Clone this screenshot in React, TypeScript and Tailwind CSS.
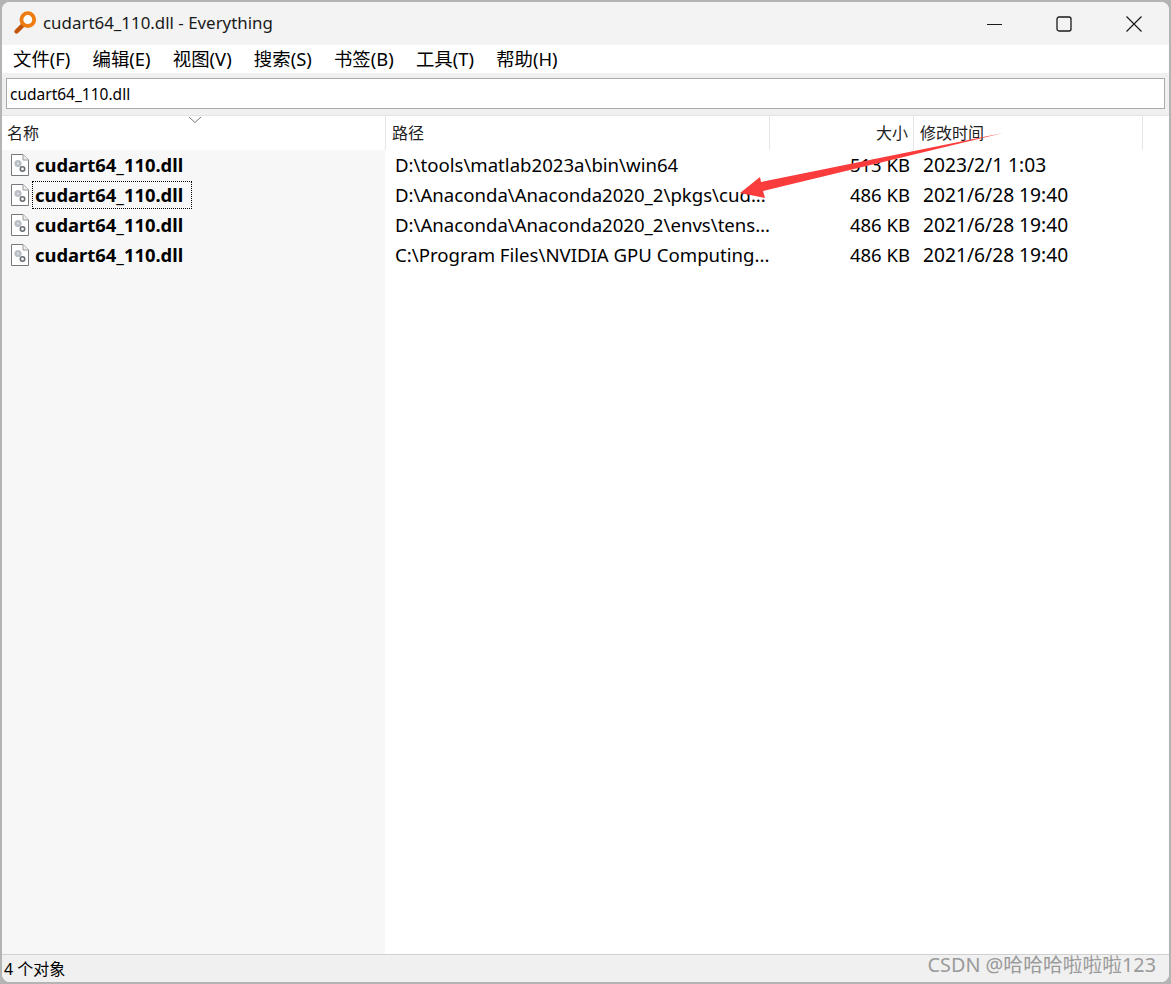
const FONT = 'font-["Noto_Sans","Noto_Sans_CJK_SC",sans-serif]'

const MENUS = ['文件(F)', '编辑(E)', '视图(V)', '搜索(S)', '书签(B)', '工具(T)', '帮助(H)']

const ROWS = [
  { path: 'D:\\tools\\matlab2023a\\bin\\win64', size: '513 KB', date: '2023/2/1 1:03' },
  { path: 'D:\\Anaconda\\Anaconda2020_2\\pkgs\\cud...', size: '486 KB', date: '2021/6/28 19:40', focused: true },
  { path: 'D:\\Anaconda\\Anaconda2020_2\\envs\\tens...', size: '486 KB', date: '2021/6/28 19:40' },
  { path: 'C:\\Program Files\\NVIDIA GPU Computing...', size: '486 KB', date: '2021/6/28 19:40' },
]

function AppIcon() {
  return (
    <svg width="24" height="24" viewBox="0 0 24 24" className="shrink-0">
      <path d="M10 14 L3.5 20.5" stroke="#c2540a" strokeWidth="4.4" strokeLinecap="round" />
      <circle cx="14.8" cy="8.6" r="6.4" fill="#fff" stroke="#ed7d12" strokeWidth="3.8" />
    </svg>
  )
}

function DllIcon() {
  return (
    <svg width="18" height="22" viewBox="0 0 18 22" className="shrink-0">
      <path d="M.5.5H12L17.5 6V21.5H.5Z" fill="#fff" stroke="#77797c" />
      <path d="M12 .5V6H17.5" fill="#eee" stroke="#9a9a9a" />
      <circle cx="7" cy="9.5" r="3.6" fill="#b9bfc5" />
      <circle cx="7" cy="9.5" r="1" fill="#e8eaec" />
      <circle cx="11.5" cy="15" r="2.2" fill="#fff" stroke="#666c72" strokeWidth="1.6" />
    </svg>
  )
}

function WindowButtons() {
  return (
    <div className="flex items-center text-[#1a1a1a]">
      <svg width="16" height="16" viewBox="0 0 16 16" className="mr-[53px]">
        <path d="M0 8.5H15" stroke="currentColor" strokeWidth="1" />
      </svg>
      <svg width="16" height="16" viewBox="0 0 16 16" className="mr-[54px]">
        <rect x="1" y="1" width="14" height="14" rx="2" fill="none" stroke="currentColor" strokeWidth="1.3" />
      </svg>
      <svg width="16" height="16" viewBox="0 0 16 16" className="mr-[27px]">
        <path d="M.5.5L15.5 15.5M15.5.5L.5 15.5" stroke="currentColor" strokeWidth="1.2" />
      </svg>
    </div>
  )
}

export default function App() {
  return (
    <div className={`${FONT} relative h-[984px] w-[1171px] overflow-hidden bg-[#b4b4b4] text-[18.6px] text-black`}>
      <div className="absolute inset-x-[2px] top-[2px] bottom-[2px] flex flex-col overflow-hidden rounded-[8px] bg-white">
        {/* Title bar */}
        <div className="flex h-[43px] shrink-0 items-center justify-between bg-[#f3f3f3]">
          <div className="flex items-center gap-[6px] pl-[11px]">
            <AppIcon />
            <span className="pb-[2px] text-[16.9px] text-[#1a1a1a]">cudart64_110.dll - Everything</span>
          </div>
          <WindowButtons />
        </div>

        {/* Menu */}
        <div className="flex h-[28px] shrink-0 items-center gap-[22.2px] pl-[11px] text-[18.4px]">
          {MENUS.map(m => <span key={m}>{m}</span>)}
        </div>

        {/* Search box */}
        <div className="shrink-0 bg-[#f0f0f0] px-[4px] pt-[5px] pb-[6px]">
          <div className="flex h-[31px] items-center border border-[#a9a9b0] bg-white pl-[3px] pt-[2px] text-[15.5px]">cudart64_110.dll</div>
        </div>

        {/* Column headers */}
        <div className="relative flex h-[35px] shrink-0 border-t border-[#e3e3e3] text-[16px] text-[#222]">
          <div className="flex w-[384px] items-center border-r border-[#e5e5e5] pl-[5px]">名称</div>
          <div className="flex w-[384px] items-center border-r border-[#e5e5e5] pl-[6px]">路径</div>
          <div className="flex w-[144px] items-center justify-end border-r border-[#e5e5e5] pr-[5px]">大小</div>
          <div className="flex w-[229px] items-center border-r border-[#e5e5e5] pl-[6px]">修改时间</div>
          <svg width="14" height="8" viewBox="0 0 14 8" className="absolute left-[186px] top-0">
            <path d="M1 1L7 6.5L13 1" fill="none" stroke="#777" />
          </svg>
        </div>

        {/* Result list */}
        <div className="relative flex min-h-0 flex-1">
          <div className="w-[383px] shrink-0 bg-[#f7f7f7]">
            {ROWS.map((r, i) => (
              <div key={i} className="flex h-[30px] items-center gap-[3px] pl-[9px] text-[18.4px] font-bold">
                <DllIcon />
                <span className={`flex h-[28px] w-[160px] items-center pl-[2px] ${r.focused ? 'border border-dotted border-black' : 'border border-transparent'}`}>
                  cudart64_110.dll
                </span>
              </div>
            ))}
          </div>
          <div className="flex-1">
            {ROWS.map((r, i) => (
              <div key={i} className="flex h-[30px] items-center">
                <div className="w-[385px] truncate pl-[10px]">{r.path}</div>
                <div className="w-[140px] text-right text-[18.5px]">{r.size}</div>
                <div className="pl-[13px] text-[19.2px]">{r.date}</div>
              </div>
            ))}
          </div>
        </div>

        {/* Status bar */}
        <div className="flex h-[28px] shrink-0 items-center border-t border-[#d0d0d0] bg-[#f0f0f0] pl-[2px] text-[16px]">4 个对象</div>
      </div>

      {/* Screenshot annotation and watermark */}
      <svg width="1171" height="984" viewBox="0 0 1171 984" className="pointer-events-none absolute left-0 top-0">
        <path d="M1003 133L761 182L760 177L740 193L765 198L763 191Z" fill="#fb3c3c" />
      </svg>
      <div className="absolute right-[15px] bottom-[4px] text-[19.8px] text-[#9a9a9a]">CSDN @哈哈哈啦啦啦123</div>
    </div>
  )
}
